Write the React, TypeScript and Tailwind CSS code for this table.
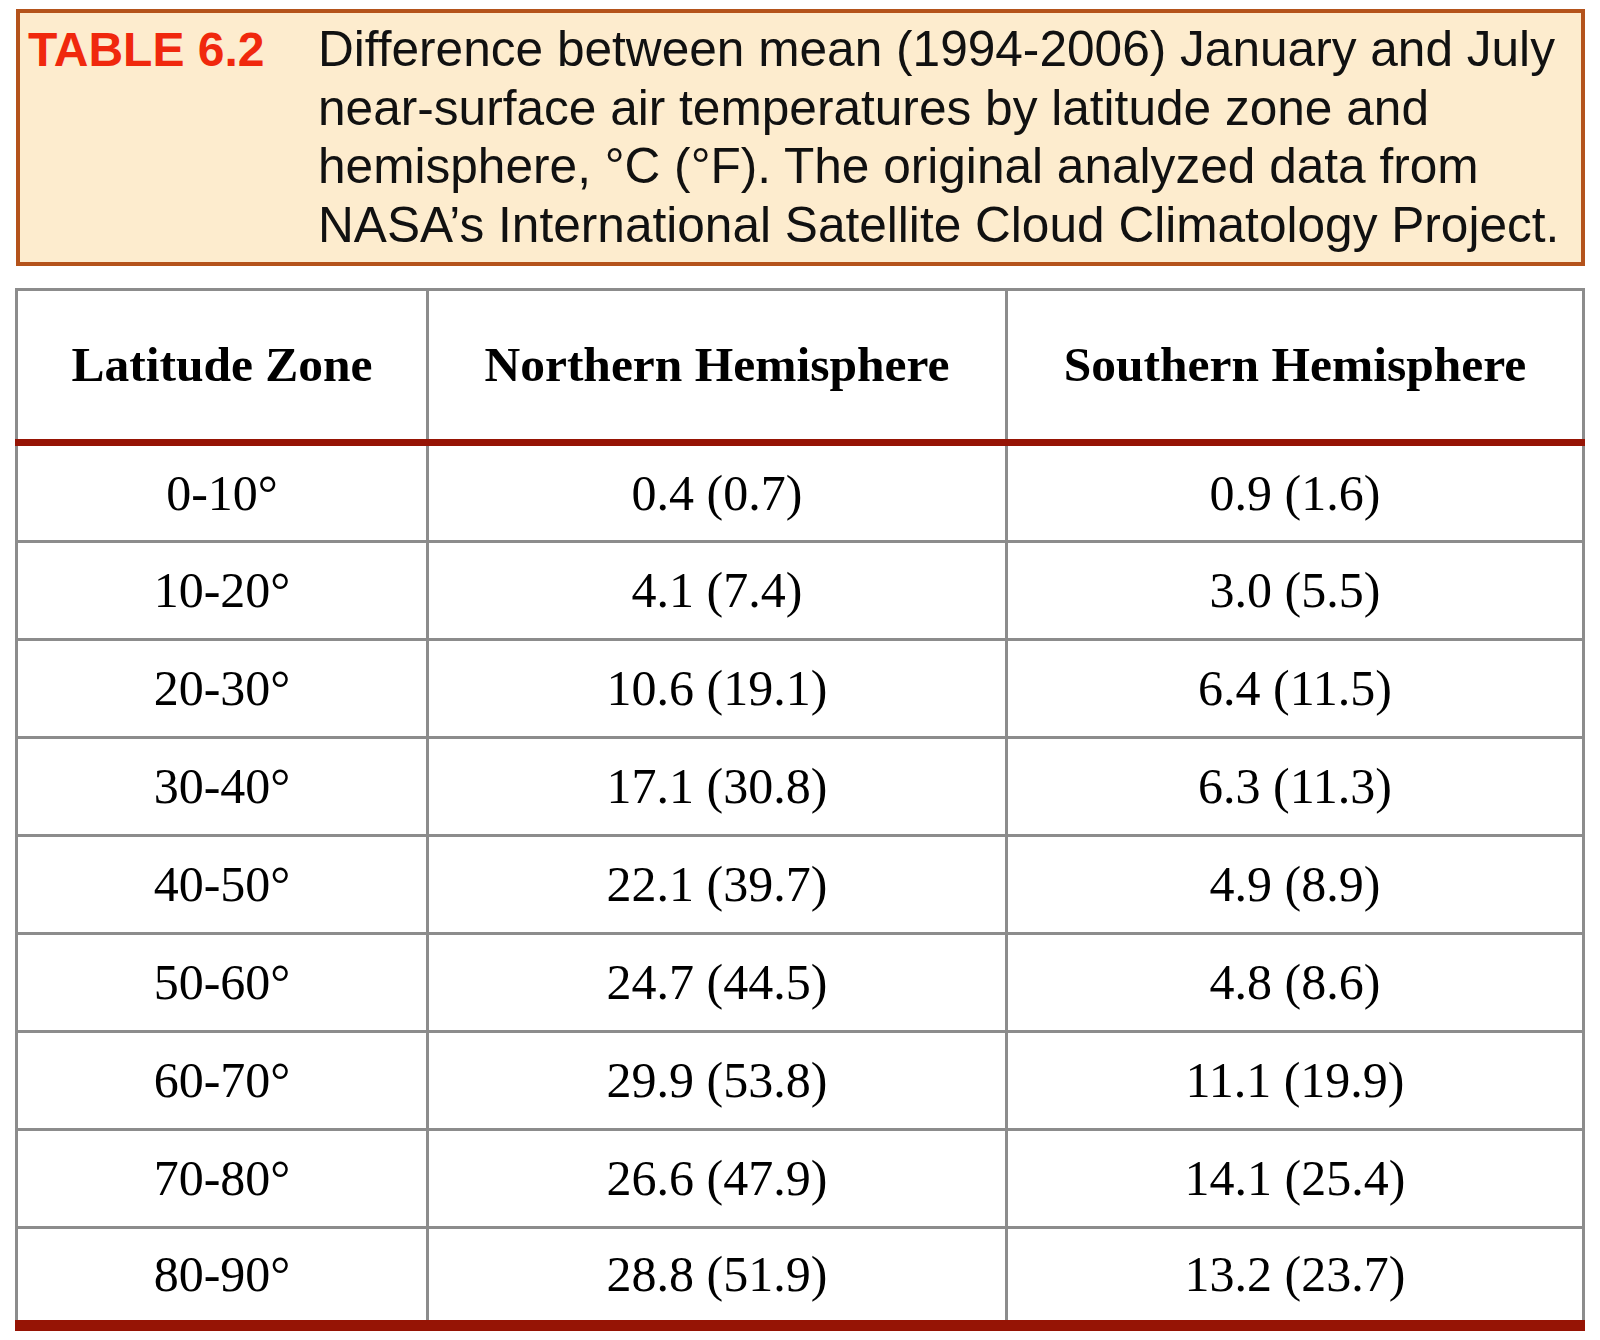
import React from "react"

type Row = {
  zone: string
  north: string
  south: string
}

const rows: Row[] = [
  { zone: "0-10°", north: "0.4 (0.7)", south: "0.9 (1.6)" },
  { zone: "10-20°", north: "4.1 (7.4)", south: "3.0 (5.5)" },
  { zone: "20-30°", north: "10.6 (19.1)", south: "6.4 (11.5)" },
  { zone: "30-40°", north: "17.1 (30.8)", south: "6.3 (11.3)" },
  { zone: "40-50°", north: "22.1 (39.7)", south: "4.9 (8.9)" },
  { zone: "50-60°", north: "24.7 (44.5)", south: "4.8 (8.6)" },
  { zone: "60-70°", north: "29.9 (53.8)", south: "11.1 (19.9)" },
  { zone: "70-80°", north: "26.6 (47.9)", south: "14.1 (25.4)" },
  { zone: "80-90°", north: "28.8 (51.9)", south: "13.2 (23.7)" },
]

const serif = "font-['Liberation_Serif','Times_New_Roman',serif]"

export default function App() {
  return (
    <div className="min-h-screen bg-white pt-[9px]">

      {/* CAPTION */}
      <div className="ml-[16px] w-[1569px] border-4 border-[#b4531b] bg-[#fdecce] pl-[8px] pt-[7px] pb-[8px] font-['Liberation_Sans',Arial,sans-serif]">
        <div className="flex items-baseline">
          <div className="w-[290px] shrink-0 text-[48px] font-bold leading-[58.5px] text-[#f0280d]">
            TABLE 6.2
          </div>
          <div className="whitespace-nowrap text-[49.6px] leading-[58.5px] text-[#111111]">
            Difference between mean (1994-2006) January and July
            <br />
            near-surface air temperatures by latitude zone and
            <br />
            hemisphere, °C (°F). The original analyzed data from
            <br />
            NASA’s International Satellite Cloud Climatology Project.
          </div>
        </div>
      </div>

      {/* TABLE */}
      <div className={`mt-[22px] ml-[15px] w-[1570px] text-black ${serif}`}>

        {/* HEADER */}
        <div className="grid h-[151px] grid-cols-[414px_579px_1fr] border-t-[3px] border-[#8c8c8c] text-[49.5px] font-bold">
          <div className="flex items-center justify-center border-x-[3px] border-[#8c8c8c]">
            Latitude Zone
          </div>
          <div className="flex items-center justify-center border-r-[3px] border-[#8c8c8c]">
            Northern Hemisphere
          </div>
          <div className="flex items-center justify-center border-r-[3px] border-[#8c8c8c]">
            Southern Hemisphere
          </div>
        </div>

        <div className="h-[7px] bg-[#961405]" />

        {/* ROWS */}
        {rows.map((row, i) => {
          const last = i === rows.length - 1
          const height = i === 0 ? "h-[97px]" : last ? "h-[91px]" : "h-[98px]"
          const line = last ? "" : "border-b-[3px]"
          return (
            <div
              key={row.zone}
              className={`grid grid-cols-[414px_579px_1fr] text-[50px] ${height}`}
            >
              <div className={`flex items-center justify-center border-x-[3px] border-[#8c8c8c] ${line}`}>
                {row.zone}
              </div>
              <div className={`flex items-center justify-center border-r-[3px] border-[#8c8c8c] ${line}`}>
                {row.north}
              </div>
              <div className={`flex items-center justify-center border-r-[3px] border-[#8c8c8c] ${line}`}>
                {row.south}
              </div>
            </div>
          )
        })}

        <div className="h-[11px] bg-[#961405]" />
      </div>

    </div>
  )
}
